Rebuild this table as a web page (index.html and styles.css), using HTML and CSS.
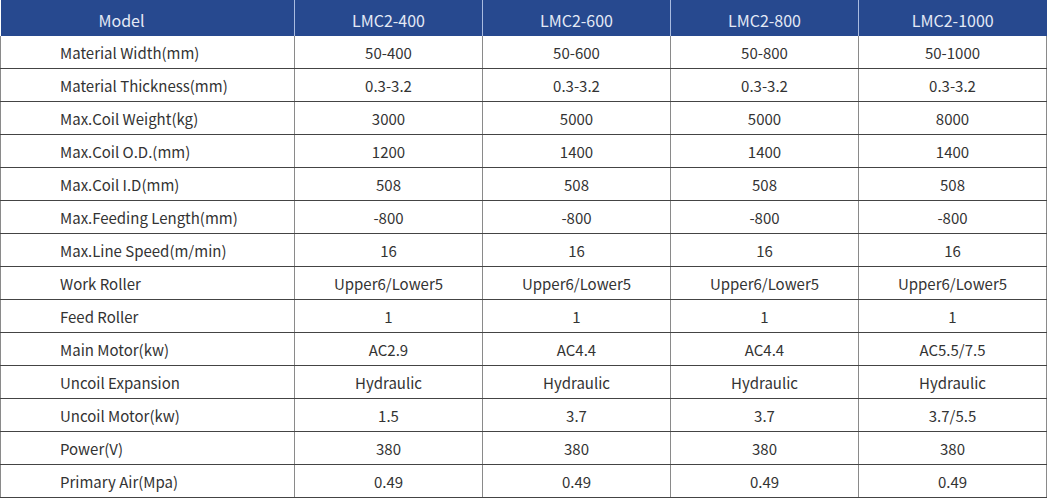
FILE: index.html
```html
<!DOCTYPE html>
<html lang="en">
<head>
<meta charset="utf-8">
<title>LMC2 Specifications</title>
<link rel="stylesheet" href="styles.css">
</head>
<body>
<table class="spec">
  <colgroup>
    <col class="c-label">
    <col class="c-val">
    <col class="c-val">
    <col class="c-val">
    <col class="c-val">
  </colgroup>
  <thead>
    <tr><th class="lbl">Model</th><th>LMC2-400</th><th>LMC2-600</th><th>LMC2-800</th><th>LMC2-1000</th></tr>
  </thead>
  <tbody>
    <tr><td class="lbl">Material Width(mm)</td><td>50-400</td><td>50-600</td><td>50-800</td><td>50-1000</td></tr>
    <tr><td class="lbl">Material Thickness(mm)</td><td>0.3-3.2</td><td>0.3-3.2</td><td>0.3-3.2</td><td>0.3-3.2</td></tr>
    <tr><td class="lbl">Max.Coil Weight(kg)</td><td>3000</td><td>5000</td><td>5000</td><td>8000</td></tr>
    <tr><td class="lbl">Max.Coil O.D.(mm)</td><td>1200</td><td>1400</td><td>1400</td><td>1400</td></tr>
    <tr><td class="lbl">Max.Coil I.D(mm)</td><td>508</td><td>508</td><td>508</td><td>508</td></tr>
    <tr><td class="lbl">Max.Feeding Length(mm)</td><td>-800</td><td>-800</td><td>-800</td><td>-800</td></tr>
    <tr><td class="lbl">Max.Line Speed(m/min)</td><td>16</td><td>16</td><td>16</td><td>16</td></tr>
    <tr><td class="lbl">Work Roller</td><td>Upper6/Lower5</td><td>Upper6/Lower5</td><td>Upper6/Lower5</td><td>Upper6/Lower5</td></tr>
    <tr><td class="lbl">Feed Roller</td><td>1</td><td>1</td><td>1</td><td>1</td></tr>
    <tr><td class="lbl">Main Motor(kw)</td><td>AC2.9</td><td>AC4.4</td><td>AC4.4</td><td>AC5.5/7.5</td></tr>
    <tr><td class="lbl">Uncoil Expansion</td><td>Hydraulic</td><td>Hydraulic</td><td>Hydraulic</td><td>Hydraulic</td></tr>
    <tr><td class="lbl">Uncoil Motor(kw)</td><td>1.5</td><td>3.7</td><td>3.7</td><td>3.7/5.5</td></tr>
    <tr><td class="lbl">Power(V)</td><td>380</td><td>380</td><td>380</td><td>380</td></tr>
    <tr><td class="lbl">Primary Air(Mpa)</td><td>0.49</td><td>0.49</td><td>0.49</td><td>0.49</td></tr>
  </tbody>
</table>
</body>
</html>
```

FILE: styles.css
```css
html, body {
  margin: 0;
  padding: 0;
  background: #ffffff;
}

body {
  font-family: "Noto Sans CJK SC", "Noto Sans", sans-serif;
  color: #333333;
}

.spec {
  border-collapse: collapse;
  table-layout: fixed;
  width: 1047px;
}

.c-label { width: 294px; }
.c-val { width: 188px; }

.spec th {
  height: 36px;
  padding: 3px 0 0 0;
  box-sizing: border-box;
  background: #27498f;
  color: #e4eaf6;
  font-weight: 400;
  font-size: 16px;
  text-align: center;
  border-left: 1px solid #a9bbe0;
}

.spec th:first-child {
  border-left: none;
}

.spec th.lbl {
  text-align: left;
  padding-left: 98px;
}

.spec td {
  height: 32px;
  padding: 0;
  font-size: 15px;
  text-align: center;
  border-left: 1px solid #8a8a8a;
  border-right: 1px solid #8a8a8a;
  border-bottom: 1px solid #444444;
}

.spec td.lbl {
  text-align: left;
  padding-left: 59px;
}
```
